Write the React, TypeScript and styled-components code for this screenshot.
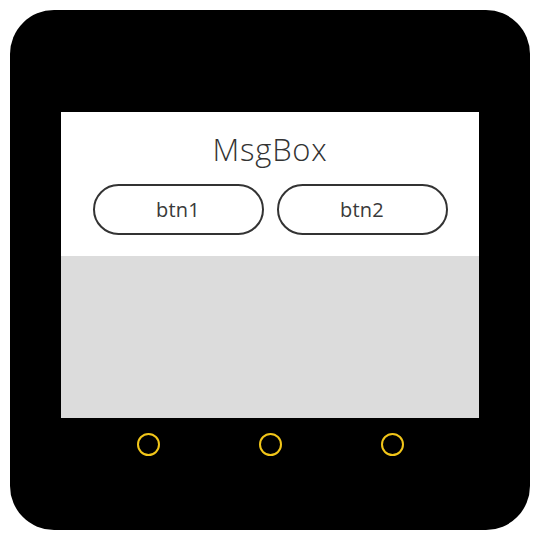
import React from "react";
import styled, { createGlobalStyle } from "styled-components";

const Global = createGlobalStyle`
  html, body { margin: 0; padding: 0; background: #ffffff; }
  body { width: 540px; height: 540px; overflow: hidden; font-family: "Open Sans", "Noto Sans", sans-serif; }
`;

const Page = styled.div`
  width: 540px;
  height: 540px;
  padding: 10px;
  box-sizing: border-box;
`;

const Device = styled.div`
  width: 520px;
  height: 520px;
  background: #000;
  border-radius: 44px;
  box-sizing: border-box;
  padding-top: 102px;
  display: flex;
  flex-direction: column;
  align-items: center;
`;

const Screen = styled.div`
  width: 418px;
  height: 306px;
  display: flex;
  flex-direction: column;
  background: #dcdcdc;
`;

const MsgBox = styled.div`
  height: 144px;
  background: #ffffff;
  display: flex;
  flex-direction: column;
  align-items: center;
  box-sizing: border-box;
  padding-top: 19px;
`;

const Title = styled.div`
  font-size: 31px;
  line-height: 37px;
  font-weight: 300;
  color: #333;
  letter-spacing: 0.8px;
`;

const BtnRow = styled.div`
  display: flex;
  gap: 13px;
  margin-top: 16px;
`;

const Btn = styled.button`
  width: 171px;
  height: 51px;
  box-sizing: border-box;
  border: 2px solid #333;
  border-radius: 26px;
  background: #fff;
  color: #3a3a3a;
  font-family: "Open Sans", "Noto Sans", sans-serif;
  font-size: 20px;
  font-weight: 400;
  letter-spacing: 0.2px;
  padding: 0;
  display: flex;
  align-items: center;
  justify-content: center;
`;

const Nav = styled.div`
  display: flex;
  gap: 99px;
  margin-top: 15px;
`;

const Dot = styled.div`
  width: 23px;
  height: 23px;
  box-sizing: border-box;
  border: 2.5px solid #f2c619;
  border-radius: 50%;
`;

export default function App() {
  return (
    <Page>
      <Global />
      <Device>
        <Screen>
          <MsgBox>
            <Title>MsgBox</Title>
            <BtnRow>
              <Btn>btn1</Btn>
              <Btn>btn2</Btn>
            </BtnRow>
          </MsgBox>
        </Screen>
        <Nav>
          <Dot />
          <Dot />
          <Dot />
        </Nav>
      </Device>
    </Page>
  );
}
